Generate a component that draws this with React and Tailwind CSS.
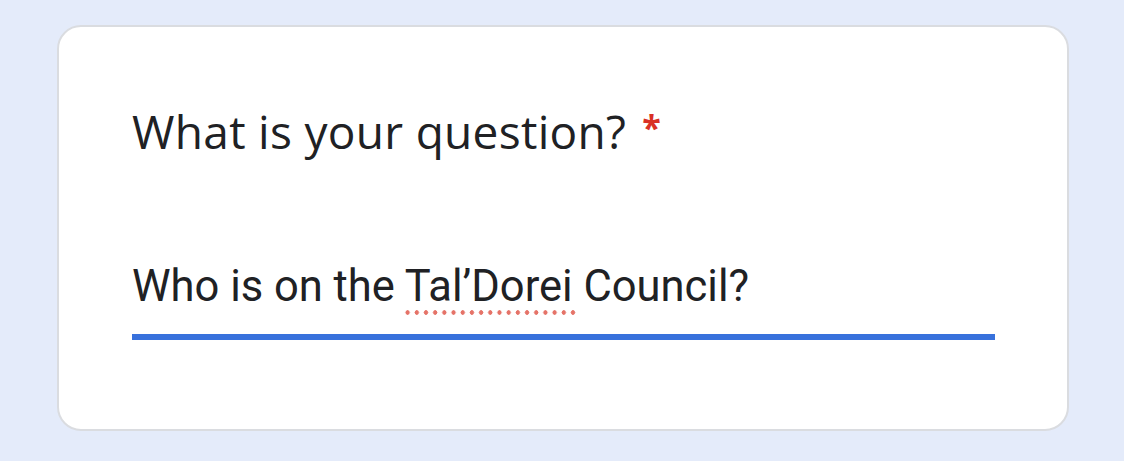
export default function App() {
  return (
    <div className="min-h-[461px] w-[1124px] bg-[#e4ebfa] pt-[25px] pl-[57px]">
      <div className="w-[1012px] h-[406px] rounded-[24px] border-2 border-[#dadce0] bg-white pl-[73px] pr-[72px] pt-[74px]">
        <h2 className="font-['Open_Sans',sans-serif] text-[46px] leading-[60px] text-[#202124] tracking-[0.3px]">
          What is your question?
          <span className="ml-[16px] align-top text-[34px] font-bold leading-[52px] text-[#d93025]">*</span>
        </h2>
        <div className="mt-[101px] border-b-[6px] border-[#3871dc] pb-[22px]">
          <p className="font-['Roboto',sans-serif] text-[43.5px] leading-[50px] text-[#202124]">
            Who is on the{" "}
            <span className="relative">
              Tal’Dorei
              <span className="absolute left-[-2px] right-[-4px] bottom-[-3px] h-[5px] bg-[radial-gradient(circle,#e57368_2px,transparent_2.5px)] bg-[length:9.2px_5px]" />
            </span>{" "}
            Council?
          </p>
        </div>
      </div>
    </div>
  );
}
